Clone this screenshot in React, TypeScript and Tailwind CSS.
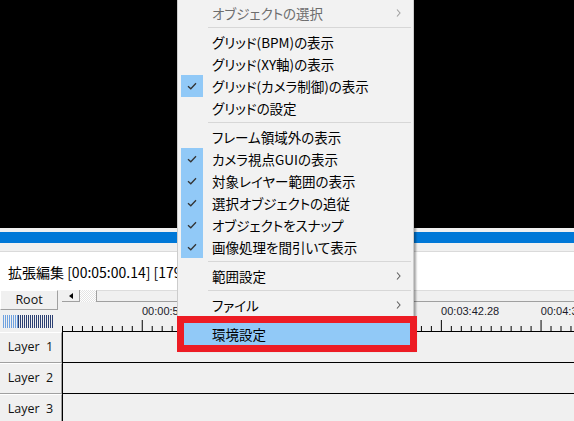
import React from "react";

type MenuEntry =
  | { kind: "sep" }
  | { kind: "item"; label: string; checked?: boolean; disabled?: boolean; sub?: boolean; active?: boolean };

const menu: MenuEntry[] = [
  { kind: "item", label: "オブジェクトの選択", disabled: true, sub: true },
  { kind: "sep" },
  { kind: "item", label: "グリッド(BPM)の表示" },
  { kind: "item", label: "グリッド(XY軸)の表示" },
  { kind: "item", label: "グリッド(カメラ制御)の表示", checked: true },
  { kind: "item", label: "グリッドの設定" },
  { kind: "sep" },
  { kind: "item", label: "フレーム領域外の表示" },
  { kind: "item", label: "カメラ視点GUIの表示", checked: true },
  { kind: "item", label: "対象レイヤー範囲の表示", checked: true },
  { kind: "item", label: "選択オブジェクトの追従", checked: true },
  { kind: "item", label: "オブジェクトをスナップ", checked: true },
  { kind: "item", label: "画像処理を間引いて表示", checked: true },
  { kind: "sep" },
  { kind: "item", label: "範囲設定", sub: true },
  { kind: "sep" },
  { kind: "item", label: "ファイル", sub: true },
  { kind: "sep" },
  { kind: "item", label: "環境設定", active: true },
];

const labels = ["00:00:55.57", "00:01:51.14", "00:02:46.71", "00:03:42.28", "00:04:37.85"];

function Ruler() {
  const ticks = Array.from({ length: 52 }, (_, k) => k);
  return (
    <div className="relative h-[30px]">
      <svg width="512" height="30" className="absolute left-0 top-0">
        {ticks.map((k) => {
          const major = (k - 8) % 10 === 0;
          const x = 0.5 + k * 9.97;
          return <line key={k} x1={x} x2={x} y1={major ? 18 : 24} y2={30} stroke="#000" strokeWidth="1" />;
        })}
        <line x1="0" x2="512" y1="29.5" y2="29.5" stroke="#000" strokeWidth="1" />
      </svg>
      {labels.map((t, j) => (
        <span
          key={t}
          className="absolute top-[3px] font-['Liberation_Sans',sans-serif] text-[11px] leading-[13px] text-[#1a1a2a]"
          style={{ left: 80 + j * 99.7 }}
        >
          {t}
        </span>
      ))}
    </div>
  );
}

function LayerRow({ n }: { n: number }) {
  return (
    <div className="flex h-[31px]">
      <div className="flex w-[62px] items-center justify-center border-t border-r border-b border-t-white border-r-[#a0a0a0] border-b-[#a0a0a0] bg-[#f0f0f0] font-['Open_Sans',sans-serif] text-[12.5px] text-[#111] whitespace-pre">
        {"Layer  " + n}
      </div>
      <div className="flex-1 border-l border-b border-black bg-[#f0f0f0]" />
    </div>
  );
}

function ContextMenu() {
  return (
    <div className="absolute left-[177px] top-[-1px] w-[237px] border border-[#cccccc] bg-[#f2f2f2] pt-[2px] pb-[3px] shadow-[2px_2px_2px_rgba(0,0,0,0.35)] text-[13.5px] [font-feature-settings:'palt']">
      {menu.map((m, i) =>
        m.kind === "sep" ? (
          <div key={i} className="flex h-[7px] items-center pl-[30px] pr-[2px]">
            <div className="h-px w-full bg-[#d7d7d7]" />
          </div>
        ) : (
          <div
            key={i}
            className={
              "relative mx-[2px] flex h-[22px] items-center pl-[32px] pr-[10px] " +
              (m.active ? "bg-[#91c9f7] " : "") +
              (m.disabled ? "text-[#6d6d6d]" : "text-black")
            }
          >
            {m.checked && (
              <div className="absolute left-[1px] top-0 flex h-[22px] w-[22px] items-center justify-center bg-[#91c9f7]">
                <svg width="10" height="8" viewBox="0 0 10 8">
                  <path d="M1 4.2 L3.8 6.8 L9 1.2" fill="none" stroke="#333" strokeWidth="1.3" />
                </svg>
              </div>
            )}
            <span className="flex-1 whitespace-nowrap">{m.label}</span>
            {m.sub && (
              <svg width="5" height="8" viewBox="0 0 5 8">
                <path d="M1 0.5 L4 4 L1 7.5" fill="none" stroke={m.disabled ? "#a0a0a0" : "#606060"} strokeWidth="1.1" />
              </svg>
            )}
          </div>
        )
      )}
    </div>
  );
}

export default function App() {
  return (
    <div className="relative h-[421px] w-[574px] overflow-hidden bg-[#f0f0f0] font-['Noto_Sans_CJK_JP',sans-serif]">
      <div className="h-[228px] bg-black" />
      <div className="h-[4px] bg-[#f0f0f0]" />
      <div className="h-[11px] bg-[#0078d7]" />
      <div className="h-[9px] border-b border-[#dadada] bg-[#f0f0f0]" />
      <div className="flex h-[38px] items-center bg-white pl-[8px] pt-[2px] text-[14px] text-black [font-feature-settings:'palt']">
        拡張編集 [00:05:00.14] [17999/18000]
      </div>

      <div className="flex">
        <div className="flex w-[62px] flex-col">
          <div className="flex h-[20px] w-[58px] items-center justify-center border border-t-white border-l-white border-r-[#a0a0a0] border-b-[#a0a0a0] font-['Open_Sans',sans-serif] text-[12.5px] text-[#111]">
            Root
          </div>
          <div className="h-[21px] pl-[3px] pt-[5px]">
            <div className="flex h-[13px] w-[51px]">
              <div className="w-[15px] bg-[repeating-linear-gradient(90deg,#6fa2e0_0_1px,transparent_1px_2px)]" />
              <div className="flex-1 bg-[repeating-linear-gradient(90deg,#2b3f73_0_1px,transparent_1px_2px)]" />
            </div>
          </div>
        </div>
        <div className="flex-1">
          <div className="flex h-[12px]">
            <div className="flex w-[18px] items-center justify-center border-r border-b border-[#a0a0a0] bg-[#f0f0f0]">
              <svg width="4" height="6" viewBox="0 0 4 6">
                <path d="M4 0 L0 3 L4 6 Z" fill="#000" />
              </svg>
            </div>
            <div className="w-[16px] bg-[repeating-conic-gradient(#ffffff_0_25%,#e4e4e4_0_50%)] bg-[length:2px_2px]" />
            <div className="flex-1 border-t border-l border-b border-t-[#dcdcdc] border-l-[#a0a0a0] border-b-[#a0a0a0] bg-[#f0f0f0]" />
          </div>
          <Ruler />
        </div>
      </div>

      <LayerRow n={1} />
      <LayerRow n={2} />
      <LayerRow n={3} />

      <ContextMenu />
      <div className="absolute left-[177px] top-[316px] h-[36px] w-[240px] border-[7px] border-[#ed1c24]" />
    </div>
  );
}
